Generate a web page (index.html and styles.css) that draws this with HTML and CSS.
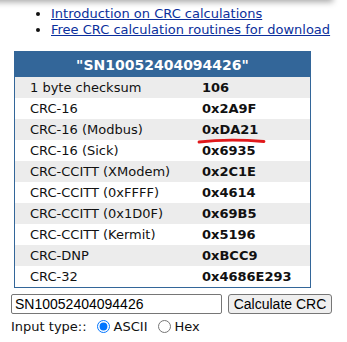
FILE: index.html
```html
<!DOCTYPE html>
<html lang="en">
<head>
  <meta charset="UTF-8" />
  <title>CRC calculation</title>
  <link rel="stylesheet" href="styles.css">
</head>
<body>
  <div class="topshade"></div>

  <ul class="links">
    <li><a href="#">Introduction on CRC calculations</a></li>
    <li><a href="#">Free CRC calculation routines for download</a></li>
  </ul>

  <table class="crc">
    <tr><th colspan="2">"SN10052404094426"</th></tr>
    <tr><td>1 byte checksum</td><td class="val">106</td></tr>
    <tr><td>CRC-16</td><td class="val">0x2A9F</td></tr>
    <tr><td>CRC-16 (Modbus)</td><td class="val"><span class="mark">0xDA21<svg class="scribble" width="70" height="8" viewBox="0 0 70 8"><path d="M2 5 C 18 3, 44 2.5, 67 4.5" stroke="#e0191b" stroke-width="2.8" fill="none" stroke-linecap="round"/></svg></span></td></tr>
    <tr><td>CRC-16 (Sick)</td><td class="val">0x6935</td></tr>
    <tr><td>CRC-CCITT (XModem)</td><td class="val">0x2C1E</td></tr>
    <tr><td>CRC-CCITT (0xFFFF)</td><td class="val">0x4614</td></tr>
    <tr><td>CRC-CCITT (0x1D0F)</td><td class="val">0x69B5</td></tr>
    <tr><td>CRC-CCITT (Kermit)</td><td class="val">0x5196</td></tr>
    <tr><td>CRC-DNP</td><td class="val">0xBCC9</td></tr>
    <tr><td>CRC-32</td><td class="val">0x4686E293</td></tr>
  </table>

  <form class="calc" onsubmit="return false">
    <div class="row">
      <input type="text" class="txt" value="SN10052404094426">
      <button class="btn">Calculate CRC</button>
    </div>
    <div class="row type">
      Input type::
      <label><input type="radio" name="t" checked>ASCII</label>
      <label><input type="radio" name="t">Hex</label>
    </div>
  </form>
</body>
</html>
```

FILE: styles.css
```css
body {
  margin: 0;
  font-family: "DejaVu Sans", Verdana, sans-serif;
  font-size: 13px;
  color: #111;
  background: #fff;
  position: relative;
}
.topshade {
  position: absolute;
  top: -12px;
  left: -10px;
  right: 14px;
  height: 12px;
  box-shadow: 0 2px 6px rgba(0,0,0,0.35);
}
.links {
  margin: 6px 0 0;
  padding-left: 51px;
  line-height: 16px;
}
.links a {
  color: #0b2f9c;
}
.crc {
  margin: 13px 0 0 14px;
  width: 297px;
  border: 1px solid #336699;
  border-collapse: collapse;
}
.crc th {
  background: #336699;
  color: #fff;
  font-size: 14px;
  height: 25px;
  padding: 0;
}
.crc td {
  height: 21px;
  padding: 0 0 0 15px;
}
.crc tr:nth-child(even) td {
  background: #ececec;
}
.crc td.val {
  font-weight: bold;
  width: 108px;
  padding-left: 0;
}
.mark {
  position: relative;
}
.scribble {
  position: absolute;
  left: -5px;
  top: 15px;
}
.calc {
  margin: 6px 0 0 11px;
}
.row {
  display: flex;
  align-items: center;
}
.txt {
  width: 211px;
  height: 20px;
  box-sizing: border-box;
  margin: 0;
  padding: 1px 3px;
  font-family: "Liberation Sans", Arial, sans-serif;
  font-size: 14px;
  color: #000;
  border: 1px solid #767676;
  border-radius: 2px;
}
.btn {
  margin-left: 6px;
  width: 104px;
  height: 20px;
  padding: 0;
  font-family: "Liberation Sans", Arial, sans-serif;
  font-size: 14px;
  color: #000;
  background: #efefef;
  border: 1px solid #767676;
  border-radius: 3px;
}
.type {
  margin-top: 5px;
}
.type label {
  display: flex;
  align-items: center;
}
.type input {
  width: 13px;
  height: 13px;
  margin: 0 4px 0 10px;
  accent-color: #0075ff;
}
```
